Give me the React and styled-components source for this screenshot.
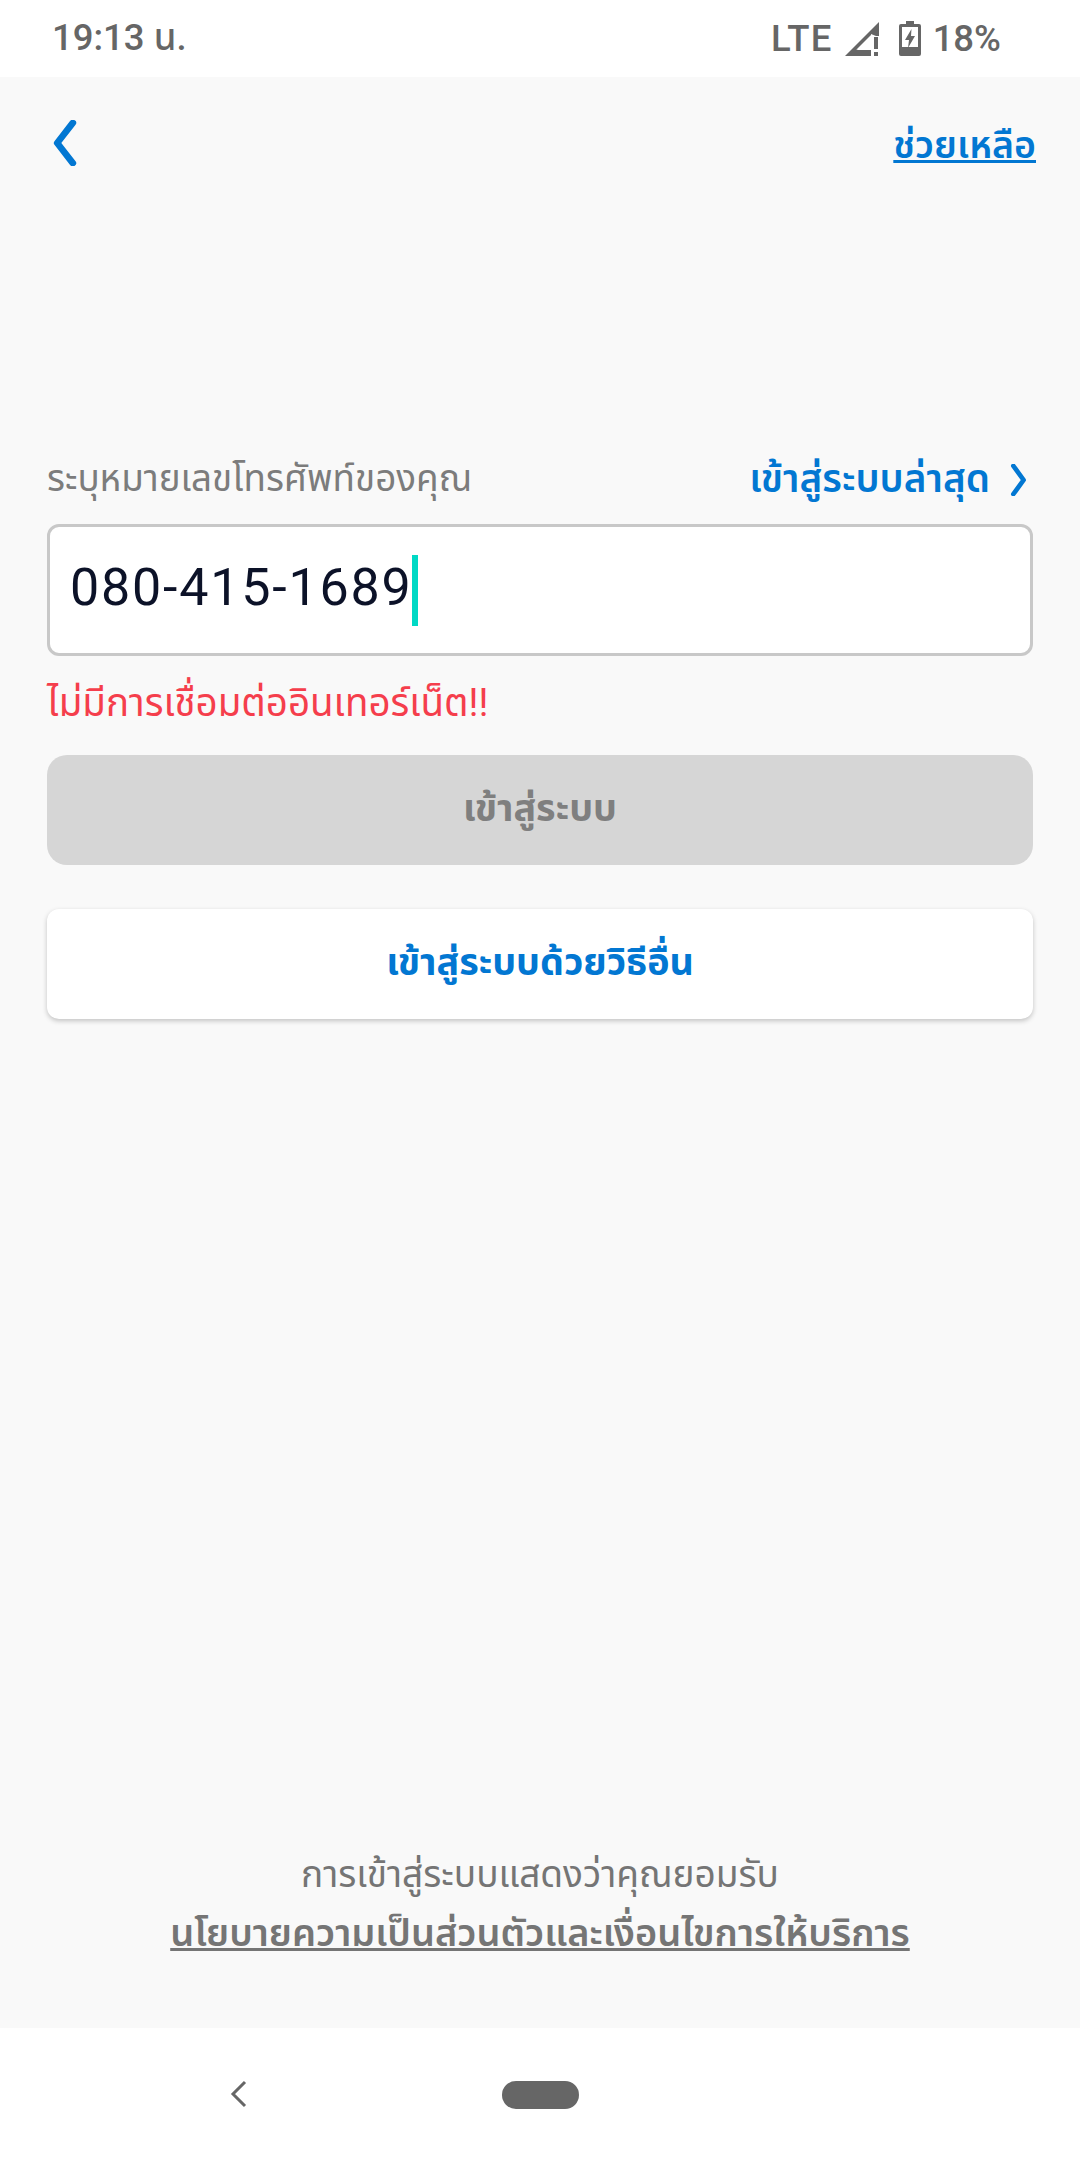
import styled, { createGlobalStyle } from 'styled-components'

const thai = `Roboto, "Noto Sans", "Noto Sans Thai", "Noto Sans CJK SC", sans-serif`

const GlobalStyle = createGlobalStyle`
    html, body {
        margin: 0;
        padding: 0;
        background: #fff;
    }
    body {
        font-family: ${thai};
    }
`

const Screen = styled.div`
    width: 1080px;
    height: 2160px;
    display: flex;
    flex-direction: column;
    background: #f9f9f9;
    overflow: hidden;
`

const StatusBar = styled.div`
    height: 77px;
    flex: none;
    box-sizing: border-box;
    padding: 0 79px 0 52px;
    background: #fff;
    display: flex;
    align-items: center;
    justify-content: space-between;
    color: #666;
    font: 500 36.5px ${thai};
`

const StatusRight = styled.div`
    display: flex;
    align-items: center;
`

const Lte = styled.span`
    margin-right: 12px;
    letter-spacing: 1.2px;
`

const IconGap = styled.span`
    width: 20px;
`

const Percent = styled.span`
    margin-left: 12px;
`

const Body = styled.main`
    flex: 1;
    display: flex;
    flex-direction: column;
    padding: 0 47px;
`

const TopBar = styled.div`
    height: 132px;
    display: flex;
    align-items: center;
    justify-content: space-between;
    margin-right: -3px;
    padding-left: 5px;
`

const HelpLink = styled.a`
    color: #0277d2;
    font-size: 37.5px;
    font-weight: 600;
    text-decoration: underline;
    padding-top: 6px;
`

const LabelRow = styled.div`
    margin-top: 235px;
    height: 80px;
    padding-bottom: 8px;
    box-sizing: border-box;
    display: flex;
    align-items: center;
    justify-content: space-between;
`

const Label = styled.span`
    color: #7c7c7c;
    font-size: 36.8px;
`

const RecentLink = styled.a`
    display: flex;
    align-items: center;
    gap: 20px;
    color: #0277d2;
    font-size: 38.7px;
    font-weight: 600;
    padding-right: 6px;
`

const PhoneField = styled.div`
    height: 132px;
    box-sizing: border-box;
    border: 3px solid #c8c8c8;
    border-radius: 12px;
    background: #fff;
    display: flex;
    align-items: center;
    padding-left: 20px;
    color: #0c1228;
    font-size: 52px;
    letter-spacing: 1.8px;
`

const PhoneNumber = styled.span`
    margin-top: -6px;
`

const Caret = styled.span`
    width: 6px;
    height: 71px;
    margin-left: -1px;
    background: #00d9c5;
`

const ErrorText = styled.p`
    margin: 0;
    height: 99px;
    padding-bottom: 4px;
    box-sizing: border-box;
    display: flex;
    align-items: center;
    color: #f53e4c;
    font-size: 38.5px;
`

const Button = styled.button`
    display: block;
    width: 100%;
    height: 110px;
    border: 0;
    padding: 0 0 2px;
    font-family: ${thai};
    font-size: 37.7px;
    font-weight: 700;
    border-radius: ${p => (p.$raised ? '12px' : '20px')};
    background: ${p => (p.$raised ? '#fff' : '#d6d6d6')};
    color: ${p => (p.$raised ? '#0277d2' : '#7f7f7f')};
    box-shadow: ${p => (p.$raised ? '0 2px 5px rgba(0, 0, 0, .22)' : 'none')};
    margin-top: ${p => (p.$raised ? '44px' : '0')};
`

const Footer = styled.footer`
    margin-top: auto;
    padding-bottom: 66px;
    text-align: center;
    color: #757575;
    font-size: 37px;
    line-height: 58px;
`

const PolicyLink = styled.a`
    display: block;
    font-size: 37.9px;
    font-weight: 600;
    text-decoration: underline;
`

const NavBar = styled.nav`
    height: 132px;
    flex: none;
    background: #fff;
    position: relative;
    display: flex;
    align-items: center;
    justify-content: center;
`

const NavBack = styled.svg`
    position: absolute;
    left: 230px;
    top: 52px;
`

const HomePill = styled.div`
    width: 77px;
    height: 28px;
    margin-top: 2px;
    border-radius: 14px;
    background: #666;
`

function Chevron({ width, height, stroke, dir = 'left' }) {
    const d = dir === 'left' ? 'M20 3 L5 24 L20 45' : 'M5 3 L20 24 L5 45'
    return (
        <svg width={width} height={height} viewBox="0 0 25 48" preserveAspectRatio="none" fill="none">
            <path d={d} stroke="#0277d2" strokeWidth={stroke} strokeLinecap="round" strokeLinejoin="round" />
        </svg>
    )
}

function SignalIcon() {
    return (
        <svg width="34" height="34" viewBox="0 0 34 34">
            <path d="M0 34 L34 0 V14 H31 L26 12 V20 L11 28 H26 V34 Z" fill="#666" />
            <path d="M12 27 L26 13 V27 Z" fill="#fff" />
            <path d="M29 15 H33 V27 H29 Z M29 30 H33 V34 H29 Z" fill="#666" />
        </svg>
    )
}

function BatteryIcon() {
    return (
        <svg width="22" height="35" viewBox="0 0 22 35">
            <path d="M7 0 H15 V3 H20 A2 2 0 0 1 22 5 V33 A2 2 0 0 1 20 35 H2 A2 2 0 0 1 0 33 V5 A2 2 0 0 1 2 3 H7 Z" fill="#666" />
            <rect x="3" y="6" width="16" height="20" fill="#fff" />
            <path d="M12.5 8 L6 19 H10 L9 27 L16 15 H12 Z" fill="#666" />
        </svg>
    )
}

function App() {
    return (
        <>
            <GlobalStyle />
            <Screen>
                <StatusBar>
                    <span>19:13 น.</span>
                    <StatusRight>
                        <Lte>LTE</Lte>
                        <SignalIcon />
                        <IconGap />
                        <BatteryIcon />
                        <Percent>18%</Percent>
                    </StatusRight>
                </StatusBar>
                <Body>
                    <TopBar>
                        <Chevron width={26} height={46} stroke={6.5} />
                        <HelpLink>ช่วยเหลือ</HelpLink>
                    </TopBar>
                    <LabelRow>
                        <Label>ระบุหมายเลขโทรศัพท์ของคุณ</Label>
                        <RecentLink>
                            เข้าสู่ระบบล่าสุด
                            <Chevron width={17} height={32} stroke={7} dir="right" />
                        </RecentLink>
                    </LabelRow>
                    <PhoneField>
                        <PhoneNumber>080-415-1689</PhoneNumber>
                        <Caret />
                    </PhoneField>
                    <ErrorText>ไม่มีการเชื่อมต่ออินเทอร์เน็ต!!</ErrorText>
                    <Button>เข้าสู่ระบบ</Button>
                    <Button $raised>เข้าสู่ระบบด้วยวิธีอื่น</Button>
                    <Footer>
                        การเข้าสู่ระบบแสดงว่าคุณยอมรับ
                        <PolicyLink>นโยบายความเป็นส่วนตัวและเงื่อนไขการให้บริการ</PolicyLink>
                    </Footer>
                </Body>
                <NavBar>
                    <NavBack width="17" height="28" viewBox="0 0 17 28" fill="none">
                        <path d="M15 2 L3 14 L15 26" stroke="#666" strokeWidth="3" />
                    </NavBack>
                    <HomePill />
                </NavBar>
            </Screen>
        </>
    )
}

export default App
